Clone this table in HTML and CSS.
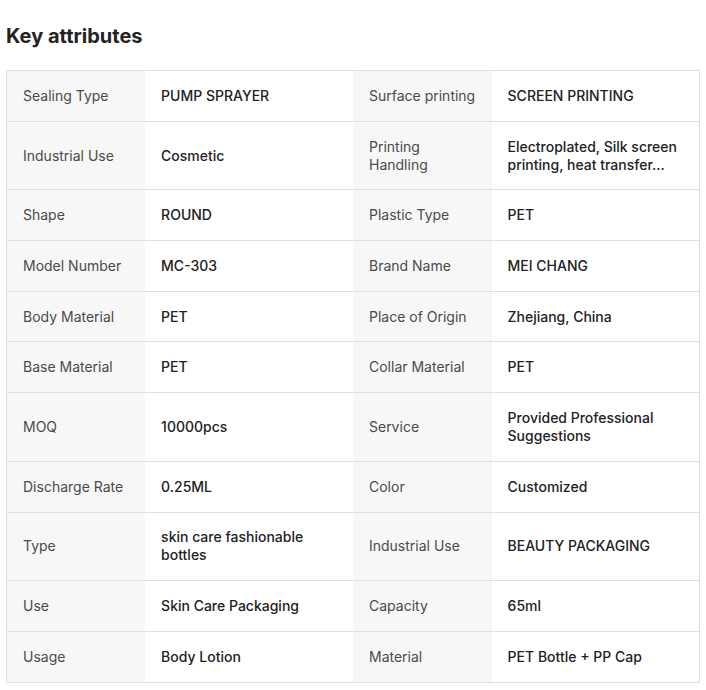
FILE: index.html
```html
<!DOCTYPE html>
<html>
<head>
<meta charset="utf-8">
<link rel="stylesheet" href="styles.css">
</head>
<body>
<div class="wrap">
  <h2 class="title">Key attributes</h2>
  <table class="attrs">
    <colgroup><col class="c-l"><col class="c-v"><col class="c-l"><col class="c-v"></colgroup>
    <tr><td class="lbl">Sealing Type</td><td class="val">PUMP SPRAYER</td><td class="lbl">Surface printing</td><td class="val">SCREEN PRINTING</td></tr>
    <tr><td class="lbl">Industrial Use</td><td class="val">Cosmetic</td><td class="lbl">Printing Handling</td><td class="val">Electroplated, Silk screen printing, heat transfer...</td></tr>
    <tr><td class="lbl">Shape</td><td class="val">ROUND</td><td class="lbl">Plastic Type</td><td class="val">PET</td></tr>
    <tr><td class="lbl">Model Number</td><td class="val">MC-303</td><td class="lbl">Brand Name</td><td class="val">MEI CHANG</td></tr>
    <tr><td class="lbl">Body Material</td><td class="val">PET</td><td class="lbl">Place of Origin</td><td class="val">Zhejiang, China</td></tr>
    <tr><td class="lbl">Base Material</td><td class="val">PET</td><td class="lbl">Collar Material</td><td class="val">PET</td></tr>
    <tr><td class="lbl">MOQ</td><td class="val">10000pcs</td><td class="lbl">Service</td><td class="val">Provided Professional Suggestions</td></tr>
    <tr><td class="lbl">Discharge Rate</td><td class="val">0.25ML</td><td class="lbl">Color</td><td class="val">Customized</td></tr>
    <tr><td class="lbl">Type</td><td class="val">skin care fashionable bottles</td><td class="lbl">Industrial Use</td><td class="val">BEAUTY PACKAGING</td></tr>
    <tr><td class="lbl">Use</td><td class="val">Skin Care Packaging</td><td class="lbl">Capacity</td><td class="val">65ml</td></tr>
    <tr><td class="lbl">Usage</td><td class="val">Body Lotion</td><td class="lbl">Material</td><td class="val">PET Bottle + PP Cap</td></tr>
  </table>
</div>
</body>
</html>
```
FILE: styles.css
```css
html, body {
  margin: 0;
  padding: 0;
  background: #fff;
}
body {
  font-family: Inter, "Noto Sans", sans-serif;
  color: #222;
}
.wrap {
  padding: 22px 6px 0 6px;
}
.title {
  margin: 0 0 20px 0;
  font-size: 20px;
  line-height: 28px;
  font-weight: 700;
  color: #222;
}
.attrs {
  width: 694px;
  border-collapse: collapse;
  table-layout: fixed;
  border: 1px solid #e0e0e0;
}
.c-l { width: 20%; }
.c-v { width: 30%; }
.attrs td {
  padding: 15.85px 16px;
  font-size: 14px;
  line-height: 18px;
  border-bottom: 1px solid #e0e0e0;
  vertical-align: middle;
}
.lbl {
  background: #f7f7f7;
  color: #4a4a4a;
  font-weight: 400;
}
.val {
  background: #fff;
  color: #222;
  font-weight: 450;
}
```
